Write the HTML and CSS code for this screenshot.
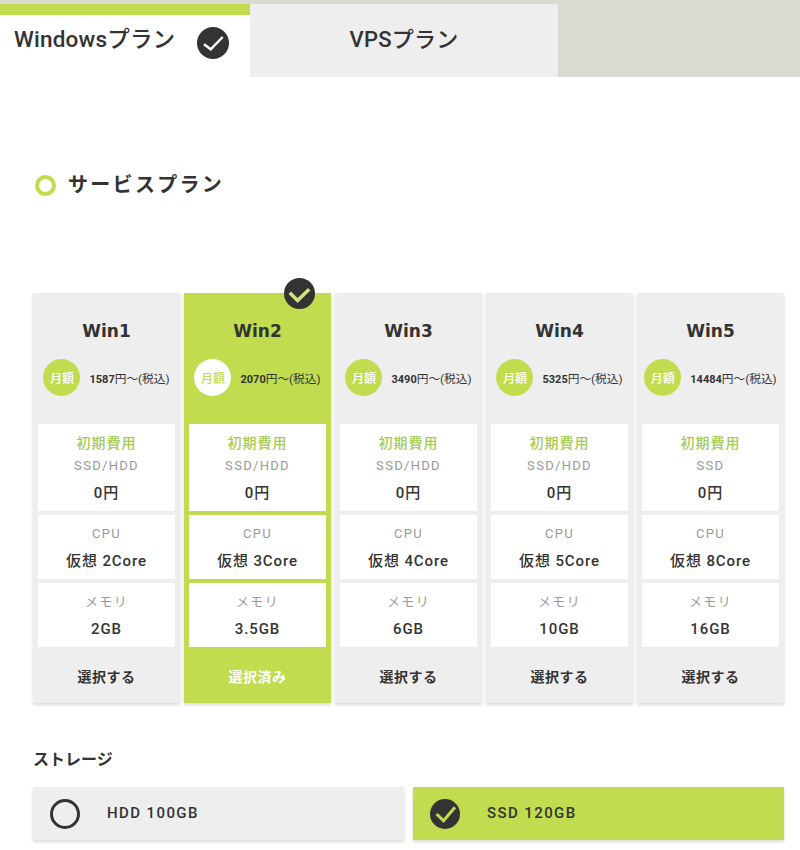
FILE: index.html
```html
<!DOCTYPE html>
<html lang="ja">
<head>
    <meta charset="UTF-8">
    <title>サービスプラン</title>
    <link rel="stylesheet" href="styles.css">
</head>
<body>
    <div class="tabs">
        <div class="tab tab-active">
            <span>Windowsプラン</span>
            <svg class="tab-check" viewBox="0 0 32 32"><circle cx="16" cy="16" r="16" fill="#333"/><path d="M7 17.3l6.7 5L25.7 10" fill="none" stroke="#fff" stroke-width="2.5"/></svg>
        </div>
        <div class="tab">VPSプラン</div>
    </div>

    <h2 class="section-title"><span class="ring"></span>サービスプラン</h2>

    <div class="plans">
        <div class="plan">
            <h3 class="plan-name">Win1</h3>
            <div class="price"><span class="price-badge">月額</span><span class="price-text"><b>1587</b>円〜(税込)</span></div>
            <div class="spec spec-first">
                <div class="spec-head">初期費用</div>
                <div class="spec-label">SSD/HDD</div>
                <div class="spec-value">0円</div>
            </div>
            <div class="spec">
                <div class="spec-label">CPU</div>
                <div class="spec-value">仮想 2Core</div>
            </div>
            <div class="spec">
                <div class="spec-label">メモリ</div>
                <div class="spec-value">2GB</div>
            </div>
            <div class="plan-btn">選択する</div>
        </div>

        <div class="plan plan-selected">
            <svg class="plan-check" viewBox="0 0 32 32"><circle cx="16" cy="16" r="16" fill="#333"/><path d="M6 15.3l8 8 12-11.6" fill="none" stroke="#cfe57a" stroke-width="3.6"/></svg>
            <h3 class="plan-name">Win2</h3>
            <div class="price"><span class="price-badge">月額</span><span class="price-text"><b>2070</b>円〜(税込)</span></div>
            <div class="spec spec-first">
                <div class="spec-head">初期費用</div>
                <div class="spec-label">SSD/HDD</div>
                <div class="spec-value">0円</div>
            </div>
            <div class="spec">
                <div class="spec-label">CPU</div>
                <div class="spec-value">仮想 3Core</div>
            </div>
            <div class="spec">
                <div class="spec-label">メモリ</div>
                <div class="spec-value">3.5GB</div>
            </div>
            <div class="plan-btn">選択済み</div>
        </div>

        <div class="plan">
            <h3 class="plan-name">Win3</h3>
            <div class="price"><span class="price-badge">月額</span><span class="price-text"><b>3490</b>円〜(税込)</span></div>
            <div class="spec spec-first">
                <div class="spec-head">初期費用</div>
                <div class="spec-label">SSD/HDD</div>
                <div class="spec-value">0円</div>
            </div>
            <div class="spec">
                <div class="spec-label">CPU</div>
                <div class="spec-value">仮想 4Core</div>
            </div>
            <div class="spec">
                <div class="spec-label">メモリ</div>
                <div class="spec-value">6GB</div>
            </div>
            <div class="plan-btn">選択する</div>
        </div>

        <div class="plan">
            <h3 class="plan-name">Win4</h3>
            <div class="price"><span class="price-badge">月額</span><span class="price-text"><b>5325</b>円〜(税込)</span></div>
            <div class="spec spec-first">
                <div class="spec-head">初期費用</div>
                <div class="spec-label">SSD/HDD</div>
                <div class="spec-value">0円</div>
            </div>
            <div class="spec">
                <div class="spec-label">CPU</div>
                <div class="spec-value">仮想 5Core</div>
            </div>
            <div class="spec">
                <div class="spec-label">メモリ</div>
                <div class="spec-value">10GB</div>
            </div>
            <div class="plan-btn">選択する</div>
        </div>

        <div class="plan">
            <h3 class="plan-name">Win5</h3>
            <div class="price"><span class="price-badge">月額</span><span class="price-text"><b>14484</b>円〜(税込)</span></div>
            <div class="spec spec-first">
                <div class="spec-head">初期費用</div>
                <div class="spec-label">SSD</div>
                <div class="spec-value">0円</div>
            </div>
            <div class="spec">
                <div class="spec-label">CPU</div>
                <div class="spec-value">仮想 8Core</div>
            </div>
            <div class="spec">
                <div class="spec-label">メモリ</div>
                <div class="spec-value">16GB</div>
            </div>
            <div class="plan-btn">選択する</div>
        </div>
    </div>

    <h4 class="storage-title">ストレージ</h4>
    <div class="storage">
        <div class="storage-option">
            <span class="storage-ring"></span>
            <span>HDD 100GB</span>
        </div>
        <div class="storage-option storage-selected">
            <svg class="storage-check" viewBox="0 0 30 30"><circle cx="15" cy="15" r="15" fill="#333"/><path d="M6.6 15l6.9 6.7L25 8.3" fill="none" stroke="#c1dc4e" stroke-width="3"/></svg>
            <span>SSD 120GB</span>
        </div>
    </div>
</body>
</html>
```

FILE: styles.css
```css
:root {
    --green: #c1dc4e;
    --green-text: #a5cb52;
    --grey-bg: #eeeeee;
    --band: #d9dad2;
    --text: #333333;
    --text-muted: #999999;
}

* {
    box-sizing: border-box;
    margin: 0;
    padding: 0;
}

html, body {
    height: 850px;
    overflow: hidden;
}

body {
    font-family: Roboto, "Noto Sans CJK JP", sans-serif;
    background: #fff;
    color: var(--text);
}

/* Tabs */
.tabs {
    display: flex;
    height: 77px;
    padding-top: 4px;
    background: var(--band);
}

.tab {
    width: 308px;
    display: flex;
    align-items: center;
    justify-content: center;
    padding-bottom: 2px;
    background: var(--grey-bg);
    font-size: 22px;
    font-weight: 500;
    line-height: 30px;
    letter-spacing: 0.2px;
}

.tab-active {
    width: 250px;
    gap: 22px;
    justify-content: flex-start;
    padding: 0 0 14px 14px;
    background: #fff;
    border-top: 11px solid var(--green);
    font-size: 22.5px;
}

.tab-check {
    width: 32px;
    height: 32px;
    margin-top: 8px;
}

/* Section heading */
.section-title {
    display: flex;
    align-items: center;
    gap: 12px;
    height: 30px;
    margin: 93px 0 93px 35px;
    font-size: 20px;
    font-weight: 700;
    line-height: 30px;
    letter-spacing: 2.3px;
}

.ring {
    width: 21px;
    height: 21px;
    border: 4.5px solid var(--green);
    border-radius: 50%;
}

/* Plan cards */
.plans {
    display: grid;
    grid-template-columns: repeat(5, 1fr);
    gap: 4px;
    margin: 0 16px 0 33px;
}

.plan {
    position: relative;
    height: 410px;
    padding: 26px 5px 0;
    background: var(--grey-bg);
    box-shadow: 0 2px 3px rgba(0, 0, 0, 0.15);
}

.plan-selected {
    background: var(--green);
}

.plan-check {
    position: absolute;
    top: -15px;
    right: 16px;
    width: 31px;
    height: 31px;
}

.plan-name {
    font-family: "DejaVu Sans", sans-serif;
    font-size: 17px;
    font-weight: 700;
    line-height: 24px;
    text-align: center;
}

.price {
    display: flex;
    align-items: center;
    justify-content: center;
    gap: 9px;
    margin: 16px 0 28px;
}

.price-badge {
    flex: none;
    width: 37px;
    height: 37px;
    display: flex;
    align-items: center;
    justify-content: center;
    background: var(--green);
    border-radius: 50%;
    color: #fff;
    font-size: 12px;
    font-weight: 500;
}

.plan-selected .price-badge {
    background: #fff;
    color: var(--green);
}

.price-text {
    font-size: 11.7px;
    white-space: nowrap;
}

.price-text b {
    font-size: 11px;
    font-weight: 700;
}

.spec {
    height: 64px;
    margin-bottom: 4px;
    padding-top: 9px;
    background: #fff;
    text-align: center;
}

.spec-first {
    height: 87px;
}

.spec-head {
    margin-bottom: 3px;
    color: var(--green-text);
    font-size: 14px;
    font-weight: 500;
    line-height: 20px;
    letter-spacing: 1px;
}

.spec-label {
    color: var(--text-muted);
    font-size: 13px;
    line-height: 20px;
    letter-spacing: 1.3px;
}

.spec-value {
    margin-top: 5px;
    font-size: 15px;
    font-weight: 500;
    line-height: 24px;
    letter-spacing: 0.9px;
}

.plan-btn {
    height: 56px;
    margin-top: -4px;
    padding-top: 3px;
    display: flex;
    align-items: center;
    justify-content: center;
    font-size: 14px;
    font-weight: 700;
    line-height: 20px;
    letter-spacing: 0.5px;
}

.plan-selected .plan-btn {
    color: #fff;
}

/* Storage */
.storage-title {
    margin: 45px 0 15px 33px;
    font-size: 16px;
    font-weight: 700;
    line-height: 24px;
}

.storage {
    display: grid;
    grid-template-columns: 1fr 1fr;
    gap: 9px;
    margin: 0 16px 0 33px;
}

.storage-option {
    height: 53px;
    display: flex;
    align-items: center;
    gap: 27px;
    padding: 0 0 2px 17px;
    background: var(--grey-bg);
    box-shadow: 0 2px 3px rgba(0, 0, 0, 0.15);
    font-size: 15px;
    font-weight: 500;
    line-height: 20px;
    letter-spacing: 1.4px;
}

.storage-selected {
    background: var(--green);
}

.storage-ring {
    width: 30px;
    height: 30px;
    margin-top: 2px;
    border: 3px solid var(--text);
    border-radius: 50%;
}

.storage-check {
    width: 30px;
    height: 30px;
    margin-top: 2px;
}
```
